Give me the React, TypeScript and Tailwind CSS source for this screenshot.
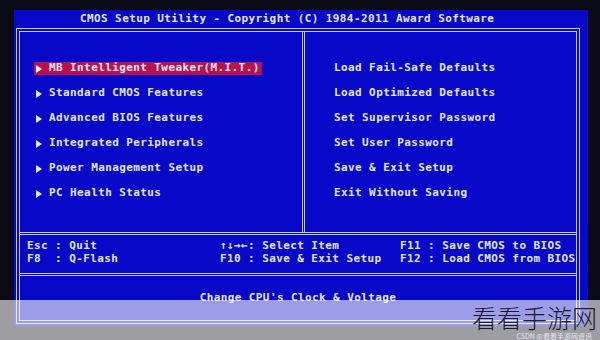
import React from "react";

const leftItems = [
  "MB Intelligent Tweaker(M.I.T.)",
  "Standard CMOS Features",
  "Advanced BIOS Features",
  "Integrated Peripherals",
  "Power Management Setup",
  "PC Health Status",
];

const rightItems = [
  "Load Fail-Safe Defaults",
  "Load Optimized Defaults",
  "Set Supervisor Password",
  "Set User Password",
  "Save & Exit Setup",
  "Exit Without Saving",
];

function Arrow() {
  return (
    <svg width="6" height="8" viewBox="0 0 6 8" className="mr-[7px] shrink-0">
      <path d="M0 0 L6 4 L0 8 Z" fill="#e4e8ff" />
    </svg>
  );
}

export default function App() {
  return (
    <div className="relative w-[600px] h-[340px] overflow-hidden bg-[#0b0b18] font-['DejaVu_Sans_Mono','Liberation_Mono',monospace] font-bold text-[11px] tracking-[0.4px] text-[#e2e6ff]">
      <div className="ml-[14px] mt-[10px] w-[574px] h-[316px] bg-[#0808c8] flex flex-col">
        {/* title */}
        <div className="h-[18px] flex items-center pl-[66px] whitespace-pre">
          CMOS Setup Utility - Copyright (C) 1984-2011 Award Software
        </div>

        {/* main box */}
        <div className="ml-[2px] w-[564px] h-[296px] border-[4px] border-double border-[#c4caff] flex flex-col">
          <div className="flex h-[200px]">
            <div className="w-[282px] pt-[24px] pl-[14px] flex flex-col">
              {leftItems.map((item, i) => (
                <div key={item} className="h-[25px] flex items-center">
                  <div
                    className={
                      i === 0
                        ? "flex items-center h-[13px] pl-[2px] pr-[2px] bg-[#b8124c]"
                        : "flex items-center h-[13px] pl-[2px] pr-[2px]"
                    }
                  >
                    <Arrow />
                    <span className="whitespace-pre">{item}</span>
                  </div>
                </div>
              ))}
            </div>
            <div className="flex-1 border-l-[3px] border-double border-[#c4caff] pt-[24px] pl-[29px] flex flex-col">
              {rightItems.map((item) => (
                <div key={item} className="h-[25px] flex items-center whitespace-pre">
                  {item}
                </div>
              ))}
            </div>
          </div>

          {/* help keys */}
          <div className="border-t-[3px] border-double border-[#c4caff] h-[41px] pt-[4px] pl-[7px] flex whitespace-pre">
            <div className="w-[193px] flex flex-col">
              <div className="h-[13px] leading-[13px]">Esc : Quit</div>
              <div className="h-[13px] leading-[13px]">F8  : Q-Flash</div>
            </div>
            <div className="w-[180px] flex flex-col">
              <div className="h-[13px] leading-[13px]">↑↓→←: Select Item</div>
              <div className="h-[13px] leading-[13px]">F10 : Save &amp; Exit Setup</div>
            </div>
            <div className="flex-1 flex flex-col">
              <div className="h-[13px] leading-[13px]">F11 : Save CMOS to BIOS</div>
              <div className="h-[13px] leading-[13px]">F12 : Load CMOS from BIOS</div>
            </div>
          </div>

          {/* item help */}
          <div className="flex-1 border-t-[3px] border-double border-[#c4caff] flex items-center justify-center whitespace-pre">
            Change CPU's Clock &amp; Voltage
          </div>
        </div>
      </div>

      {/* watermark band */}
      <div className="absolute left-0 top-[300px] w-[600px] h-[40px] bg-white/60" />
      <div className="absolute right-[3px] top-[303px] font-['Noto_Sans_CJK_SC',sans-serif] font-light text-[25px] leading-[29px] tracking-normal text-[#1c1c2a]">
        看看手游网
      </div>
      <div className="absolute right-[8px] top-[332px] font-['Noto_Sans_CJK_SC',sans-serif] font-normal text-[7px] leading-[8px] tracking-normal text-[#e8e8f0]">
        CSDN @看看手游网资讯
      </div>
    </div>
  );
}
